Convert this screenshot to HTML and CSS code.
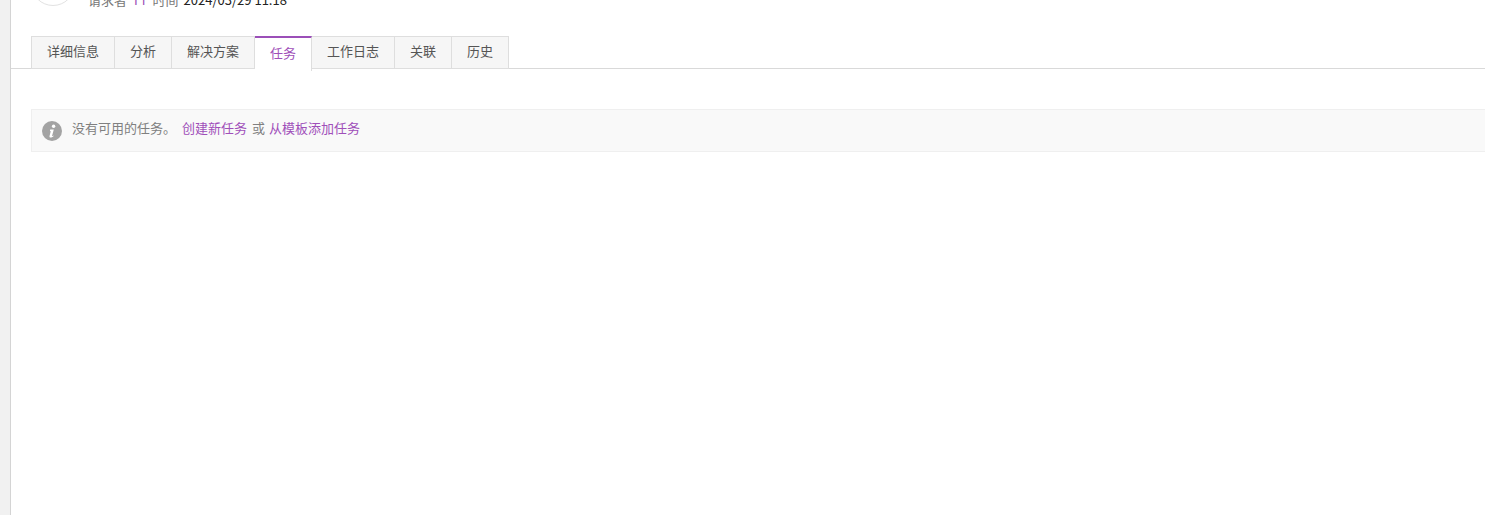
FILE: index.html
```html
<!DOCTYPE html>
<html lang="zh-CN">
<head>
    <meta charset="UTF-8">
    <meta name="viewport" content="width=device-width, initial-scale=1.0">
    <title>任务</title>
    <link rel="stylesheet" href="styles.css">
</head>
<body>
    <div class="page">
        <div class="ticket-head">
            <div class="avatar"></div>
            <div class="meta">
                <span class="meta-label">请求者</span>
                <span class="meta-user">TT</span>
                <span class="meta-label">时间</span>
                <span class="meta-time">2024/03/29 11:18</span>
            </div>
        </div>

        <ul class="tabs">
            <li class="tab">详细信息</li>
            <li class="tab">分析</li>
            <li class="tab">解决方案</li>
            <li class="tab active">任务</li>
            <li class="tab">工作日志</li>
            <li class="tab">关联</li>
            <li class="tab">历史</li>
        </ul>

        <div class="content">
            <div class="notice">
                <svg class="info-icon" width="20" height="20" viewBox="0 0 20 20">
                    <circle cx="10" cy="10" r="10" fill="#a3a3a3"/>
                    <circle cx="11.6" cy="5.200" r="1.700" fill="#fff"/>
                    <path d="M8.200 8.400h3.600l-1.700 6.300c-.1.400.3.500 1.300-.2l.3.500c-1.200 1.200-2.300 1.500-3.100 1.500-1 0-1.300-.7-1-1.800l1.100-4.200c.1-.5-.2-.7-.8-.6z" fill="#fff"/>
                </svg>
                <div class="notice-body">
                    <span class="notice-text">没有可用的任务。</span>
                    <a class="notice-link" href="#">创建新任务</a>
                    <span class="notice-text">或</span>
                    <a class="notice-link" href="#">从模板添加任务</a>
                </div>
            </div>
        </div>
    </div>
</body>
</html>
```

FILE: styles.css
```css
* {
    box-sizing: border-box;
    margin: 0;
    padding: 0;
}

html, body {
    height: 100%;
    overflow: hidden;
}

body {
    font-family: "Noto Sans CJK SC", "Liberation Sans", sans-serif;
    font-size: 13px;
    color: #555;
    background-color: #fff;
}

.page {
    height: 100%;
    margin-left: 10px;
    border-left: 1px solid #d4d4d4;
    box-shadow: -10px 0 0 #f1f1f1;
}

.ticket-head {
    height: 36px;
    padding-left: 20px;
    display: flex;
    gap: 13px;
    align-items: flex-start;
}

.avatar {
    flex: none;
    width: 44px;
    height: 44px;
    margin-top: -38px;
    border: 1px solid #e2e2e2;
    border-radius: 50%;
}

.meta {
    display: flex;
    gap: 5px;
    margin-top: -9px;
    line-height: 18px;
    white-space: nowrap;
}

.meta-label {
    color: #777;
}

.meta-user {
    color: #9b4fb8;
}

.meta-time {
    color: #222;
}

.tabs {
    list-style: none;
    display: flex;
    height: 33px;
    padding-left: 20px;
    border-bottom: 1px solid #d9d9d9;
}

.tab {
    height: 33px;
    padding: 0 15px;
    line-height: 27px;
    color: #555;
    background-color: #f6f6f6;
    border: 1px solid #dedede;
    border-left-width: 0;
}

.tab:first-child {
    border-left-width: 1px;
}

.tab.active {
    height: 35px;
    color: #a04fb9;
    line-height: 30px;
    background-color: #fff;
    border-top: 2px solid #9b4fb8;
    border-bottom: 0;
}

.content {
    padding: 40px 0 0 20px;
}

.notice {
    display: flex;
    align-items: center;
    height: 43px;
    padding-left: 10px;
    background-color: #f9f9f9;
    border: 1px solid #efefef;
    border-right: 0;
}

.info-icon {
    flex: none;
    margin-right: 10px;
}

.notice-body {
    display: flex;
    margin-bottom: 6px;
}

.notice-text {
    color: #808080;
}

.notice-link {
    margin-left: 6px;
    color: #a04fb9;
    text-decoration: none;
}

.notice-link + .notice-text {
    margin-left: 5px;
}

.notice-text + .notice-link:last-child {
    margin-left: 4px;
}
```
